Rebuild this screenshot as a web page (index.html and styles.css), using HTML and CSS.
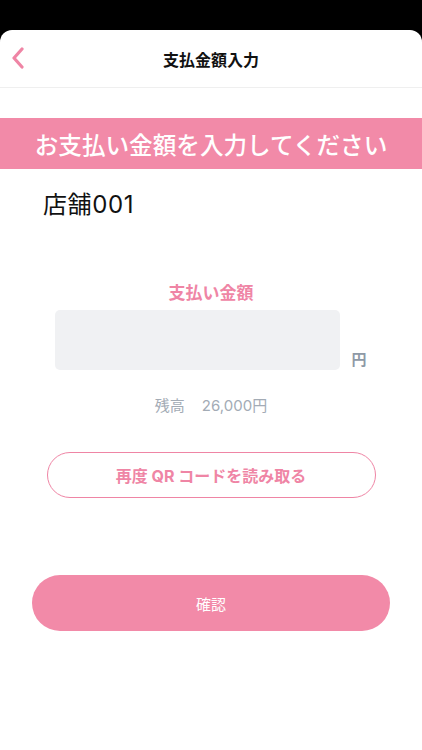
FILE: index.html
```html
<!DOCTYPE html>
<html lang="ja">
<head>
    <meta charset="UTF-8">
    <meta name="viewport" content="width=device-width, initial-scale=1.0">
    <title>支払金額入力</title>
    <link rel="stylesheet" href="styles.css">
</head>
<body>

<div class="topbar"></div>

<div class="sheet">
    <div class="header">
        <button class="back-button" aria-label="戻る">
            <svg width="14" height="22" viewBox="0 0 14 22">
                <path d="M11 2 L3 11 L11 20" fill="none" stroke="#ef85a5" stroke-width="3.2" stroke-linecap="round" stroke-linejoin="round"/>
            </svg>
        </button>
        <div class="title">支払金額入力</div>
    </div>

    <div class="banner">お支払い金額を入力してください</div>

    <div class="shop-name">店舗001</div>

    <div class="amount-section">
        <div class="amount-label">支払い金額</div>
        <div class="amount-row">
            <input type="text" class="amount-input" id="kingaku">
            <span class="yen">円</span>
        </div>
        <div class="balance"><span>残高</span><span>26,000円</span></div>
    </div>

    <button class="rescan-button">再度 QR コードを読み取る</button>

    <button class="confirm-button">確認</button>
</div>

</body>
</html>
```

FILE: styles.css
```css
body {
    font-family: Inter, "Noto Sans CJK JP", sans-serif;
    margin: 0;
    padding: 0;
    background-color: #000;
    color: #111;
}
.topbar {
    height: 30px;
    background-color: #000;
}
.sheet {
    background-color: #fff;
    border-radius: 12px 12px 0 0;
    height: 720px;
    display: flex;
    flex-direction: column;
    align-items: center;
}
.header {
    width: 100%;
    height: 57px;
    border-bottom: 1px solid #efefef;
    display: flex;
    align-items: center;
    justify-content: center;
    position: relative;
}
.back-button {
    position: absolute;
    left: 11px;
    top: 17px;
    background: none;
    border: none;
    padding: 0;
    display: flex;
}
.title {
    font-size: 16px;
    font-weight: bold;
    color: #111;
}
.banner {
    margin-top: 30px;
    width: 100%;
    height: 51px;
    background-color: #f28aa8;
    color: #fff;
    font-size: 23.6px;
    font-weight: 500;
    display: flex;
    align-items: center;
    justify-content: center;
}
.shop-name {
    align-self: flex-start;
    margin: 20px 0 0 43px;
    font-size: 24px;
    line-height: 32px;
    letter-spacing: 0.6px;
    color: #111;
}
.amount-section {
    margin-top: 60px;
    display: flex;
    flex-direction: column;
    align-items: center;
}
.amount-label {
    font-size: 17px;
    font-weight: bold;
    line-height: 24px;
    color: #ef85a5;
}
.amount-row {
    margin-top: 5px;
    display: flex;
    align-items: flex-end;
    gap: 11px;
}
.amount-input {
    width: 285px;
    height: 60px;
    box-sizing: border-box;
    border: none;
    border-radius: 5px;
    background-color: #f0f1f3;
    padding: 0 12px;
    font-size: 18px;
}
.yen {
    font-size: 15px;
    font-weight: bold;
    line-height: 20px;
    color: #8e99a6;
}
.balance {
    margin-top: 24px;
    display: flex;
    gap: 17px;
    font-size: 15px;
    line-height: 24px;
    color: #a3abb5;
}
.rescan-button {
    margin-top: 34px;
    width: 329px;
    height: 46px;
    background-color: #fff;
    border: 1px solid #ef85a5;
    border-radius: 23px;
    color: #ef85a5;
    font-family: inherit;
    font-size: 16px;
    font-weight: bold;
    cursor: pointer;
}
.confirm-button {
    margin-top: 77px;
    width: 358px;
    height: 56px;
    background-color: #f28aa8;
    border: none;
    border-radius: 28px;
    color: #fff;
    font-family: inherit;
    font-size: 15px;
    cursor: pointer;
}
.confirm-button:hover {
    background-color: #e97598;
}
```
